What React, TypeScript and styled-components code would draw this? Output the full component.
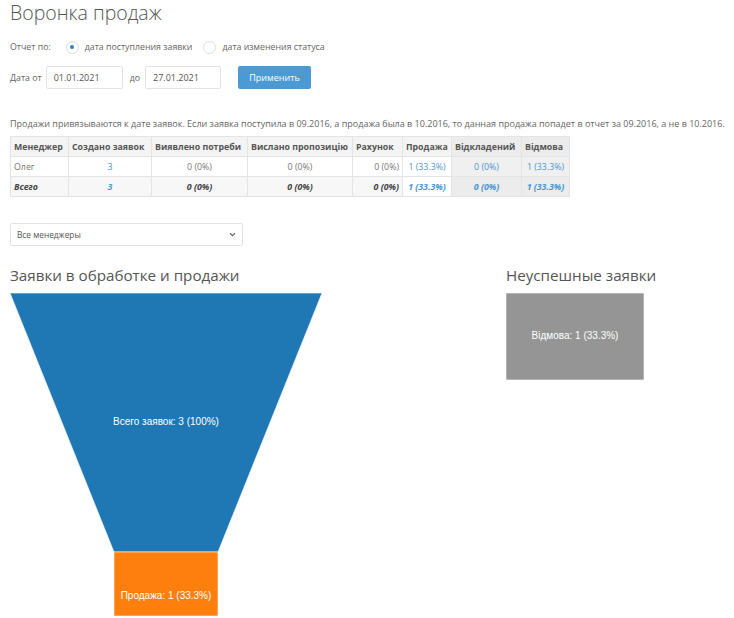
import React from "react";
import styled, { createGlobalStyle } from "styled-components";

const Global = createGlobalStyle`
  html, body { margin: 0; padding: 0; background: #fff; }
  body { font-family: "Open Sans", "Noto Sans", sans-serif; color: #666; }
`;

const Page = styled.div`
  padding: 0 10px;
  width: 724px;
  box-sizing: border-box;
`;

const Title = styled.h1`
  margin: 0;
  font-size: 19.5px;
  font-weight: 300;
  line-height: 26px;
  color: #555;
`;

const Row = styled.div<{ $mt: number; $h: number }>`
  display: flex;
  align-items: center;
  margin-top: ${(p) => p.$mt}px;
  height: ${(p) => p.$h}px;
  font-size: 8.8px;
  color: #666;
`;

const Label = styled.span<{ $mr: number; $ml?: number }>`
  margin-right: ${(p) => p.$mr}px;
  margin-left: ${(p) => p.$ml || 0}px;
`;

const Radio = styled.span<{ $on?: boolean }>`
  width: 13px;
  height: 13px;
  border-radius: 50%;
  border: 1px solid #ddd;
  box-sizing: border-box;
  background: #fff;
  display: inline-flex;
  align-items: center;
  justify-content: center;
  margin-right: 6px;
  &::after {
    content: "";
    width: 4px;
    height: 4px;
    border-radius: 50%;
    background: ${(p) => (p.$on ? "#2d7fc1" : "transparent")};
  }
`;

const Input = styled.div<{ $w: number }>`
  width: ${(p) => p.$w}px;
  height: 23px;
  box-sizing: border-box;
  border: 1px solid #e3e3e3;
  border-radius: 2px;
  padding-left: 7px;
  display: flex;
  align-items: center;
  color: #555;
  font-size: 9px;
`;

const Button = styled.button`
  margin-left: 17px;
  width: 73px;
  height: 23px;
  border: none;
  border-radius: 2px;
  background: #4c9ad3;
  color: #fff;
  font-family: inherit;
  font-size: 9px;
  padding: 0;
`;

const Note = styled.p`
  margin: 29px 0 0;
  font-size: 9px;
  line-height: 12px;
  color: #666;
  white-space: nowrap;
`;

const Table = styled.table`
  margin-top: 6px;
  border-collapse: collapse;
  table-layout: fixed;
  width: 559px;
  font-size: 8.8px;
  color: #777;
`;

const Th = styled.th<{ $w: number; $gray?: boolean }>`
  width: ${(p) => p.$w}px;
  height: 20px;
  box-sizing: border-box;
  padding: 0 3px;
  background: ${(p) => (p.$gray ? "#ececec" : "#f4f4f4")};
  border: 1px solid #e4e4e4;
  font-weight: 700;
  color: #555;
  text-align: left;
  white-space: nowrap;
  overflow: hidden;
`;

const Td = styled.td<{ $bg?: string; $align?: string; $link?: boolean; $total?: boolean }>`
  height: 20px;
  box-sizing: border-box;
  padding: 0 3px;
  border: 1px solid #e4e4e4;
  background: ${(p) => p.$bg || "#fff"};
  text-align: ${(p) => p.$align || "center"};
  color: ${(p) => (p.$link ? "#4a95d0" : p.$total ? "#444" : "#777")};
  font-style: ${(p) => (p.$total ? "italic" : "normal")};
  font-weight: ${(p) => (p.$total ? 700 : 400)};
  white-space: nowrap;
`;

const Select = styled.div`
  margin-top: 26px;
  width: 233px;
  height: 23px;
  box-sizing: border-box;
  border: 1px solid #e3e3e3;
  border-radius: 2px;
  display: flex;
  align-items: center;
  justify-content: space-between;
  padding: 0 6px 0 6px;
  font-size: 8.3px;
  color: #555;
`;

const Charts = styled.div`
  margin-top: 19px;
  display: flex;
  align-items: flex-start;
`;

const ChartCol = styled.div<{ $w: number }>`
  width: ${(p) => p.$w}px;
  display: flex;
  flex-direction: column;
`;

const ChartTitle = styled.h2`
  margin: 0 0 8px;
  font-size: 15.2px;
  font-weight: 400;
  line-height: 20px;
  color: #555;
`;

const Svg = styled.svg`
  display: block;
  font-family: "Liberation Sans", Arial, sans-serif;
`;

const cols = [
  { name: "Менеджер", w: 58 },
  { name: "Создано заявок", w: 83 },
  { name: "Виявлено потреби", w: 96 },
  { name: "Вислано пропозицію", w: 105 },
  { name: "Рахунок", w: 50 },
  { name: "Продажа", w: 49 },
  { name: "Відкладений", w: 70, gray: true },
  { name: "Відмова", w: 48, gray: true },
];

type Cell = { v: string; link?: boolean; align?: string };

const rowCells = (first: string): Cell[] => [
  { v: first, align: "left" },
  { v: "3", link: true },
  { v: "0 (0%)" },
  { v: "0 (0%)" },
  { v: "0 (0%)", align: "right" },
  { v: "1 (33.3%)", link: true },
  { v: "0 (0%)", link: true },
  { v: "1 (33.3%)", link: true },
];

export default function App() {
  return (
    <>
      <Global />
      <Page>
        <Title>Воронка продаж</Title>
        <Row $mt={11} $h={20}>
          <Label $mr={15}>Отчет по:</Label>
          <Radio $on />
          <Label $mr={11}>дата поступления заявки</Label>
          <Radio />
          <Label $mr={0}>дата изменения статуса</Label>
        </Row>
        <Row $mt={9} $h={23}>
          <Label $mr={4}>Дата от</Label>
          <Input $w={77}>01.01.2021</Input>
          <Label $mr={5} $ml={7}>до</Label>
          <Input $w={76}>27.01.2021</Input>
          <Button>Применить</Button>
        </Row>
        <Note>
          Продажи привязываются к дате заявок. Если заявка поступила в 09.2016, а продажа была в 10.2016, то данная продажа попадет в отчет за 09.2016, а не в 10.2016.
        </Note>
        <Table>
          <thead>
            <tr>
              {cols.map((c) => (
                <Th key={c.name} $w={c.w} $gray={c.gray}>
                  {c.name}
                </Th>
              ))}
            </tr>
          </thead>
          <tbody>
            <tr>
              {rowCells("Олег").map((c, i) => (
                <Td
                  key={i}
                  $align={c.align}
                  $link={c.link}
                  $bg={cols[i].gray ? "#f0f0f0" : "#fff"}
                >
                  {c.v}
                </Td>
              ))}
            </tr>
            <tr>
              {rowCells("Всего").map((c, i) => (
                <Td
                  key={i}
                  $align={c.align}
                  $link={c.link}
                  $total
                  $bg={cols[i].gray ? "#ececec" : i === 5 ? "#fff" : "#f7f7f7"}
                >
                  {c.v}
                </Td>
              ))}
            </tr>
          </tbody>
        </Table>
        <Select>
          <span>Все менеджеры</span>
          <svg width="7" height="5" viewBox="0 0 8 6">
            <path d="M1 1.5 L4 4.5 L7 1.5" fill="none" stroke="#666" strokeWidth="1.4" />
          </svg>
        </Select>
        <Charts>
          <ChartCol $w={496}>
            <ChartTitle>Заявки в обработке и продажи</ChartTitle>
            <Svg width="313" height="325" viewBox="0 0 313 325">
              <polygon points="0,0 312,0 208,259 104,259" fill="#1f77b4" stroke="#fff" strokeWidth="0.6" />
              <rect x="104" y="259" width="104" height="64" fill="#ff7f0e" stroke="#fff" strokeWidth="0.6" />
              <text x="156" y="132" fill="#fff" fontSize="10" textAnchor="middle">
                Всего заявок: 3 (100%)
              </text>
              <text x="156" y="306" fill="#fff" fontSize="10" textAnchor="middle">
                Продажа: 1 (33.3%)
              </text>
            </Svg>
          </ChartCol>
          <ChartCol $w={200}>
            <ChartTitle>Неуспешные заявки</ChartTitle>
            <Svg width="140" height="90" viewBox="0 0 140 90">
              <rect x="0" y="0" width="138" height="87" fill="#959595" stroke="#fff" strokeWidth="0.6" />
              <text x="69" y="46" fill="#fff" fontSize="10" textAnchor="middle">
                Відмова: 1 (33.3%)
              </text>
            </Svg>
          </ChartCol>
        </Charts>
      </Page>
    </>
  );
}
